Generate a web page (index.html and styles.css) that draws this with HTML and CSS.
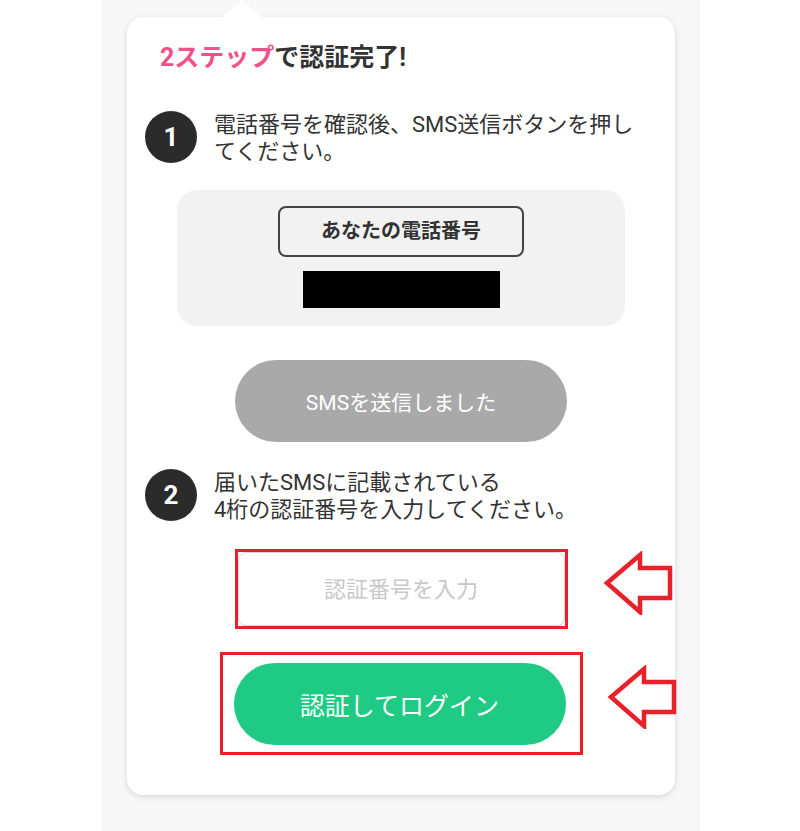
FILE: index.html
```html
<!DOCTYPE html>
<html lang="ja">
<head>
    <meta charset="UTF-8">
    <meta name="viewport" content="width=device-width, initial-scale=1.0">
    <title>SMS認証</title>
    <link rel="stylesheet" href="styles.css">
</head>
<body>
    <div class="page">
        <div class="card">
            <h2 class="title"><span class="pink">2ステップ</span>で認証完了!</h2>

            <div class="step">
                <div class="num">1</div>
                <p class="step-text">電話番号を確認後、SMS送信ボタンを押し<br>てください。</p>
            </div>

            <div class="phone-box">
                <div class="phone-label">あなたの電話番号</div>
                <div class="phone-mask"></div>
            </div>

            <button class="btn btn-sent">SMSを送信しました</button>

            <div class="step step-2">
                <div class="num">2</div>
                <p class="step-text">届いたSMSに記載されている<br>4桁の認証番号を入力してください。</p>
            </div>

            <div class="mark mark-input">
                <input type="tel" class="code" placeholder="認証番号を入力">
            </div>

            <div class="mark mark-login">
                <button class="btn btn-login">認証してログイン</button>
            </div>

            <!-- arrows -->
            <svg class="arrow arrow-1" viewBox="0 0 70 64" width="70" height="64">
                <path d="M4 32 L37 4 L37 17 L67 17 L67 47 L37 47 L37 61 Z" />
            </svg>
            <svg class="arrow arrow-2" viewBox="0 0 70 64" width="70" height="64">
                <path d="M4 32 L37 4 L37 17 L67 17 L67 47 L37 47 L37 61 Z" />
            </svg>
        </div>
    </div>
</body>
</html>
```

FILE: styles.css
```css
body {
    margin: 0;
    background: #fff;
    font-family: Roboto, "Noto Sans CJK JP", sans-serif;
    color: #333;
}
.page {
    width: 598px;
    min-height: 831px;
    margin-left: 102px;
    padding: 17px 25px 0;
    box-sizing: border-box;
    background: #f7f7f7;
}
.card {
    position: relative;
    background: #fff;
    border-radius: 16px;
    padding: 24px 18px 40px;
    box-shadow: 0 2px 6px rgba(0, 0, 0, 0.13);
}
.card::before {
    content: '';
    position: absolute;
    top: -17px;
    left: 95px;
    width: 40px;
    height: 17px;
    background: #fff;
    clip-path: polygon(50% 0, 100% 100%, 0 100%);
}
.title {
    margin: 0 0 0 15px;
    font-size: 25px;
    line-height: 34px;
    font-weight: bold;
    color: #333;
}
.pink { color: #f2508b; }

.step {
    display: flex;
    align-items: flex-start;
    gap: 17px;
    margin-top: 36px;
}
.step-2 { margin-top: 27px; }
.num {
    flex: none;
    width: 52px;
    height: 52px;
    border-radius: 50%;
    background: #2b2b2b;
    color: #fff;
    font-size: 26px;
    font-weight: bold;
    line-height: 52px;
    text-align: center;
}
.step-text {
    margin: 0;
    font-size: 22px;
    line-height: 27px;
    color: #333;
}

.phone-box {
    width: 448px;
    margin: 25px auto 0;
    padding: 16px 0 18px;
    box-sizing: border-box;
    background: #f2f2f2;
    border-radius: 20px;
}
.phone-label {
    width: 246px;
    height: 51px;
    margin: 0 auto;
    box-sizing: border-box;
    border: 2px solid #444;
    border-radius: 8px;
    font-size: 20px;
    font-weight: bold;
    line-height: 47px;
    text-align: center;
}
.phone-mask {
    width: 197px;
    height: 37px;
    margin: 14px auto 0;
    background: #000;
}

.btn {
    display: block;
    width: 332px;
    height: 82px;
    border: none;
    border-radius: 41px;
    color: #fff;
    font-family: inherit;
    cursor: pointer;
}
.btn-sent {
    margin: 34px auto 0;
    background: #a9a9a9;
    font-size: 21px;
}
.btn-login {
    background: #1fca84;
    font-size: 25px;
}

.mark {
    box-sizing: border-box;
    border: 3px solid #e8202a;
}
.mark-input {
    width: 333px;
    height: 80px;
    margin: 26px auto 0;
}
.code {
    width: 100%;
    height: 100%;
    box-sizing: border-box;
    border: 1px solid #d4d4d4;
    border-radius: 8px;
    font-family: inherit;
    font-size: 22px;
    text-align: center;
    color: #333;
    outline: none;
}
.code::placeholder { color: #c8c8c8; }
.mark-login {
    width: 363px;
    margin: 23px auto 0;
    padding: 8px 14px 7px 11px;
}

.arrow {
    position: absolute;
    fill: none;
    stroke: #e8202a;
    stroke-width: 4.5;
}
.arrow-1 { left: 476px; top: 534px; }
.arrow-2 { left: 480px; top: 648px; }
```
